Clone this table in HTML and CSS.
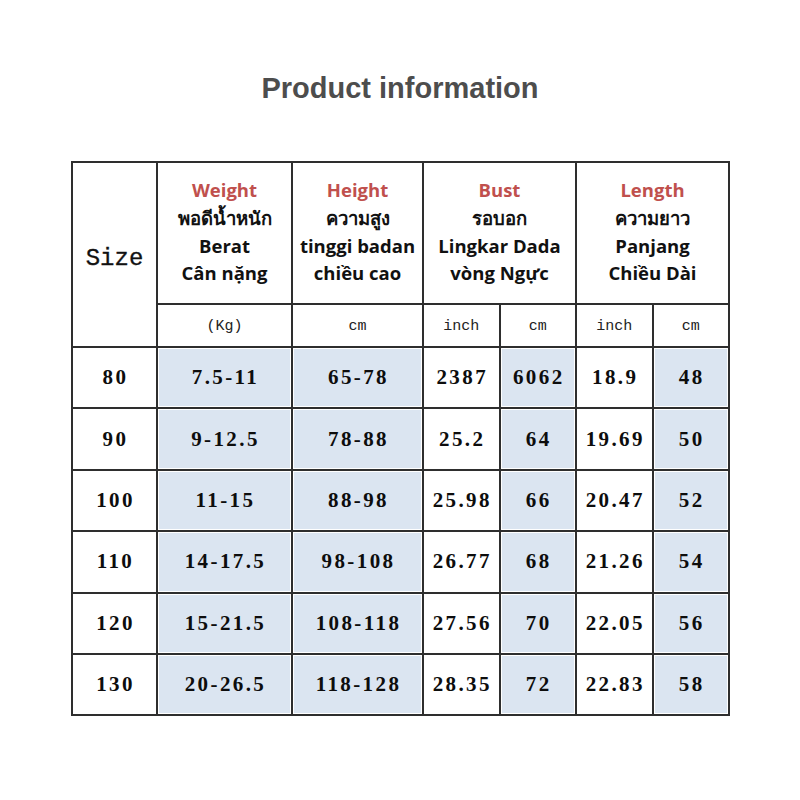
FILE: index.html
```html
<!DOCTYPE html>
<html>
<head>
<meta charset="utf-8">
<link rel="stylesheet" href="styles.css">
</head>
<body>
<div class="page">
  <h1 class="title">Product information</h1>
  <table class="sizes">
    <colgroup>
      <col class="c-size"><col class="c-weight"><col class="c-height">
      <col class="c-narrow"><col class="c-narrow"><col class="c-narrow"><col class="c-narrow">
    </colgroup>
    <tr class="r-head">
      <td class="size-label" rowspan="2">Size</td>
      <td class="head"><span class="en">Weight</span><br>พอดีน้ำหนัก<br>Berat<br>Cân nặng</td>
      <td class="head"><span class="en">Height</span><br>ความสูง<br>tinggi badan<br>chiều cao</td>
      <td class="head" colspan="2"><span class="en">Bust</span><br>รอบอก<br>Lingkar Dada<br>vòng Ngực</td>
      <td class="head" colspan="2"><span class="en">Length</span><br>ความยาว<br>Panjang<br>Chiều Dài</td>
    </tr>
    <tr class="r-unit">
      <td class="unit">(Kg)</td>
      <td class="unit">cm</td>
      <td class="unit">inch</td>
      <td class="unit">cm</td>
      <td class="unit">inch</td>
      <td class="unit">cm</td>
    </tr>
    <tr class="r-data">
      <td>80</td><td class="blue">7.5-11</td><td class="blue">65-78</td><td>2387</td><td class="blue">6062</td><td>18.9</td><td class="blue">48</td>
    </tr>
    <tr class="r-data">
      <td>90</td><td class="blue">9-12.5</td><td class="blue">78-88</td><td>25.2</td><td class="blue">64</td><td>19.69</td><td class="blue">50</td>
    </tr>
    <tr class="r-data">
      <td>100</td><td class="blue">11-15</td><td class="blue">88-98</td><td>25.98</td><td class="blue">66</td><td>20.47</td><td class="blue">52</td>
    </tr>
    <tr class="r-data">
      <td>110</td><td class="blue">14-17.5</td><td class="blue">98-108</td><td>26.77</td><td class="blue">68</td><td>21.26</td><td class="blue">54</td>
    </tr>
    <tr class="r-data">
      <td>120</td><td class="blue">15-21.5</td><td class="blue">108-118</td><td>27.56</td><td class="blue">70</td><td>22.05</td><td class="blue">56</td>
    </tr>
    <tr class="r-data">
      <td>130</td><td class="blue">20-26.5</td><td class="blue">118-128</td><td>28.35</td><td class="blue">72</td><td>22.83</td><td class="blue">58</td>
    </tr>
  </table>
</div>
</body>
</html>
```

FILE: styles.css
```css
html, body {
  margin: 0;
  padding: 0;
  background: #ffffff;
}

.page {
  width: 800px;
  height: 800px;
  padding-top: 70px;
  box-sizing: border-box;
}

.title {
  margin: 0;
  height: 36px;
  line-height: 36px;
  text-align: center;
  font-family: "Liberation Sans", Arial, sans-serif;
  font-size: 29px;
  font-weight: 700;
  color: #4d4d4d;
}

.sizes {
  margin: 55px 0 0 71px;
  border-collapse: collapse;
  table-layout: fixed;
  width: 657px;
}

.c-size { width: 85px; }
.c-weight { width: 135px; }
.c-height { width: 131px; }
.c-narrow { width: 76.5px; }

.sizes td {
  border: 2px solid #2e2e2e;
  padding: 0 0 0 2px;
  text-align: center;
  vertical-align: middle;
  color: #0d0d0d;
  font-family: "Liberation Serif", "Times New Roman", serif;
  font-weight: 700;
  font-size: 21px;
  letter-spacing: 2.4px;
}

.r-head { height: 142px; }
.r-unit { height: 43px; }
.r-data { height: 61.4px; }

.sizes td.size-label {
  font-family: "Liberation Mono", "Courier New", monospace;
  font-weight: 400;
  font-size: 24px;
  letter-spacing: 0;
  color: #111111;
  padding: 8px 0 0 0;
  -webkit-text-stroke: 0.3px #111111;
}

.sizes td.head {
  font-family: "Open Sans", "Noto Sans", sans-serif;
  font-weight: 700;
  font-size: 18.5px;
  line-height: 27.7px;
  letter-spacing: 0;
  color: #111111;
  padding: 0 0 3px 0;
}

.head .en {
  color: #c0504d;
}

.sizes td.unit {
  font-family: "Liberation Mono", "Courier New", monospace;
  font-weight: 400;
  font-size: 15px;
  letter-spacing: 0;
  color: #222222;
  padding: 2px 0 0 0;
}

.sizes td.blue {
  background: #dbe5f1;
  box-shadow: inset 0 0 0 1px #ffffff;
}
```
